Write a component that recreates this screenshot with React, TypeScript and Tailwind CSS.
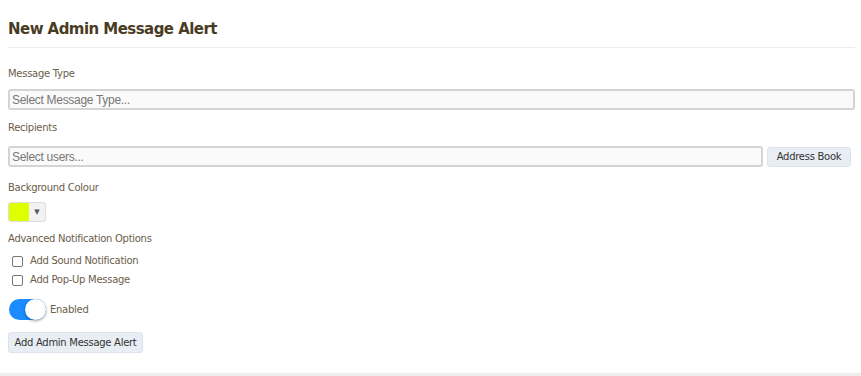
import React from "react";

export default function App() {
  const verdana = { fontFamily: '"DejaVu Sans", Verdana, sans-serif' };
  const arial = { fontFamily: '"Liberation Sans", Arial, sans-serif' };
  return (
    <div className="w-[861px] h-[376px] bg-white relative overflow-hidden" style={verdana}>
      <div className="pl-2">
        <div className="pt-[19px] pb-[8px] border-b border-[#ececec] mr-[6px]">
          <h1 className="text-[15px] leading-[20px] font-bold tracking-[-0.55px] text-[#4a3c24]">New Admin Message Alert</h1>
        </div>
        <div className="mt-[19px] h-[14px] text-[10px] leading-[14px] tracking-[-0.28px] text-[#6b5d4b]">Message Type</div>
        <div className="mt-[8px] h-[21px] w-[847px] border-2 border-[#d4d4d4] rounded-[3px] bg-[#fafafa] flex items-center pl-[2px] text-[12px] tracking-[-0.3px] text-[#777]" style={arial}>
          Select Message Type...
        </div>
        <div className="mt-[11px] h-[14px] text-[10px] leading-[14px] tracking-[-0.28px] text-[#6b5d4b]">Recipients</div>
        <div className="mt-[11px] flex items-center gap-[4px] h-[21px]">
          <div className="h-[21px] w-[755px] border-2 border-[#d4d4d4] rounded-[3px] bg-[#fafafa] flex items-center pl-[2px] text-[12px] tracking-[-0.3px] text-[#777]" style={arial}>
            Select users...
          </div>
          <button className="h-[20px] w-[84px] rounded-[3px] border border-[#dde3ec] bg-[#e9edf4] text-[10px] tracking-[-0.28px] text-[#333]">Address Book</button>
        </div>
        <div className="mt-[14px] h-[14px] text-[10px] leading-[14px] tracking-[-0.28px] text-[#6b5d4b]">Background Colour</div>
        <div className="mt-[7px] flex h-[20px] w-[38px] rounded-[3px] border border-[#ddd] bg-[#f2f2f2] overflow-hidden">
          <div className="w-[20px] h-full bg-[#ddff00]"></div>
          <div className="flex-1 flex items-center justify-center text-[7px] text-[#555]">▼</div>
        </div>
        <div className="mt-[10px] h-[14px] text-[10px] leading-[14px] tracking-[-0.28px] text-[#6b5d4b]">Advanced Notification Options</div>
        <div className="mt-[8px] flex flex-col gap-[5px] pl-[4px]">
          <div className="flex items-center gap-[7px] h-[14px]">
            <span className="w-[11px] h-[11px] border border-[#777] rounded-[2px] bg-white"></span>
            <span className="text-[10px] leading-[14px] tracking-[-0.28px] text-[#6b5d4b]">Add Sound Notification</span>
          </div>
          <div className="flex items-center gap-[7px] h-[14px]">
            <span className="w-[11px] h-[11px] border border-[#777] rounded-[2px] bg-white"></span>
            <span className="text-[10px] leading-[14px] tracking-[-0.28px] text-[#6b5d4b]">Add Pop-Up Message</span>
          </div>
        </div>
        <div className="mt-[12px] flex items-center gap-[4px] h-[21px]">
          <div className="relative w-[37px] h-[21px] rounded-full bg-[#1a8cff] ml-[1px]">
            <div className="absolute right-0 top-0 w-[21px] h-[21px] rounded-full bg-white shadow-[0_1px_3px_rgba(0,0,0,0.4)]"></div>
          </div>
          <span className="text-[10px] leading-[14px] tracking-[-0.28px] text-[#6b5d4b]">Enabled</span>
        </div>
        <button className="mt-[12px] block h-[21px] w-[135px] rounded-[3px] border border-[#dde3ec] bg-[#e9edf4] text-[10px] tracking-[-0.28px] text-[#333]">Add Admin Message Alert</button>
      </div>
      <div className="absolute left-0 right-0 bottom-0 h-[3px] bg-[#eeeeee]"></div>
    </div>
  );
}
